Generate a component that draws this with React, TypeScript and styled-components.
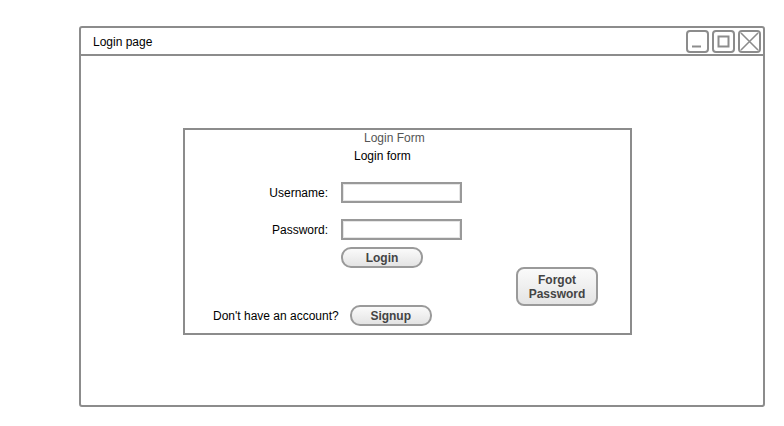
import React from 'react';
import styled, { createGlobalStyle } from 'styled-components';

const BORDER = '#8c8c8c';

const GlobalStyle = createGlobalStyle`
  html, body {
    margin: 0;
    padding: 0;
    background: #ffffff;
  }
  body {
    font-family: 'Liberation Sans', Arial, sans-serif;
    font-size: 12px;
    color: #000;
  }
`;

const Page = styled.div`
  padding: 26px 0 0 79px;
`;

const Window = styled.div`
  width: 686px;
  height: 381px;
  box-sizing: border-box;
  border: 2px solid ${BORDER};
  border-radius: 3px;
  display: flex;
  flex-direction: column;
`;

const TitleBar = styled.div`
  height: 25px;
  border-bottom: 2px solid ${BORDER};
  display: flex;
  align-items: center;
  justify-content: space-between;
  padding: 1px 2px 0 12px;
`;

const Title = styled.span`
  line-height: 14px;
`;

const Controls = styled.div`
  display: flex;
  gap: 3px;
  margin-top: -1px;
`;

const Content = styled.div`
  flex: 1;
  padding: 72px 0 0 102px;
`;

const FormBox = styled.div`
  width: 449px;
  height: 207px;
  box-sizing: border-box;
  border: 2px solid ${BORDER};
  display: flex;
  flex-direction: column;
`;

const BoxCaption = styled.div`
  margin: 1px 0 0 179px;
  line-height: 14px;
  color: #555;
`;

const Heading = styled.div`
  margin: 4px 0 0 169px;
  line-height: 14px;
`;

const FieldGrid = styled.div`
  margin-top: 19px;
  display: grid;
  grid-template-columns: 143px 121px;
  column-gap: 13px;
  row-gap: 16px;
  align-items: center;
`;

const Label = styled.label`
  text-align: right;
  line-height: 14px;
`;

const Input = styled.div`
  height: 21px;
  box-sizing: border-box;
  border: 2px solid #999;
  box-shadow: inset 0 0 0 1px #e6e6e6;
  background: #fff;
`;

const Lower = styled.div`
  margin-top: 7px;
  display: grid;
  grid-template-columns: 247px auto;
  column-gap: 84px;
`;

const LeftColumn = styled.div`
  display: flex;
  flex-direction: column;
  align-items: flex-start;
`;

const Button = styled.button<{ $w: number; $h: number; $radius: number }>`
  flex-shrink: 0;
  width: ${(p) => p.$w}px;
  height: ${(p) => p.$h}px;
  box-sizing: border-box;
  border: 2px solid #9a9a9a;
  border-radius: ${(p) => p.$radius}px;
  background: linear-gradient(#fafafa, #e4e4e4);
  font-family: 'Liberation Sans', Arial, sans-serif;
  font-size: 12px;
  font-weight: bold;
  line-height: 14px;
  color: #444;
  padding: 0;
  display: flex;
  align-items: center;
  justify-content: center;
  text-align: center;
`;

const LoginSlot = styled.div`
  margin-left: 156px;
`;

const SignupRow = styled.div`
  margin: 37px 0 0 28px;
  display: flex;
  align-items: center;
  gap: 11px;
  white-space: nowrap;
`;

const SideSlot = styled.div`
  align-self: center;
`;

const ControlIcon = ({ kind }: { kind: 'min' | 'max' | 'close' }) => (
  <svg width="23" height="23" viewBox="0 0 23 23">
    <rect x="1" y="1" width="21" height="21" rx="3" fill="#fff" stroke={BORDER} strokeWidth="2" />
    {kind === 'min' && <line x1="6" y1="16.5" x2="15" y2="16.5" stroke={BORDER} strokeWidth="2" />}
    {kind === 'max' && <rect x="6.5" y="6.5" width="10" height="10" fill="none" stroke={BORDER} strokeWidth="2" />}
    {kind === 'close' && (
      <path d="M3 3 L20 20 M20 3 L3 20" stroke={BORDER} strokeWidth="1.6" fill="none" />
    )}
  </svg>
);

export default function App() {
  return (
    <Page>
      <GlobalStyle />
      <Window>
        <TitleBar>
          <Title>Login page</Title>
          <Controls>
            <ControlIcon kind="min" />
            <ControlIcon kind="max" />
            <ControlIcon kind="close" />
          </Controls>
        </TitleBar>
        <Content>
          <FormBox>
            <BoxCaption>Login Form</BoxCaption>
            <Heading>Login form</Heading>
            <FieldGrid>
              <Label>Username:</Label>
              <Input />
              <Label>Password:</Label>
              <Input />
            </FieldGrid>
            <Lower>
              <LeftColumn>
                <LoginSlot>
                  <Button $w={82} $h={21} $radius={10}>Login</Button>
                </LoginSlot>
                <SignupRow>
                  <span>Don't have an account?</span>
                  <Button $w={82} $h={21} $radius={10}>Signup</Button>
                </SignupRow>
              </LeftColumn>
              <SideSlot>
                <Button $w={82} $h={39} $radius={8}>
                  Forgot
                  <br />
                  Password
                </Button>
              </SideSlot>
            </Lower>
          </FormBox>
        </Content>
      </Window>
    </Page>
  );
}
